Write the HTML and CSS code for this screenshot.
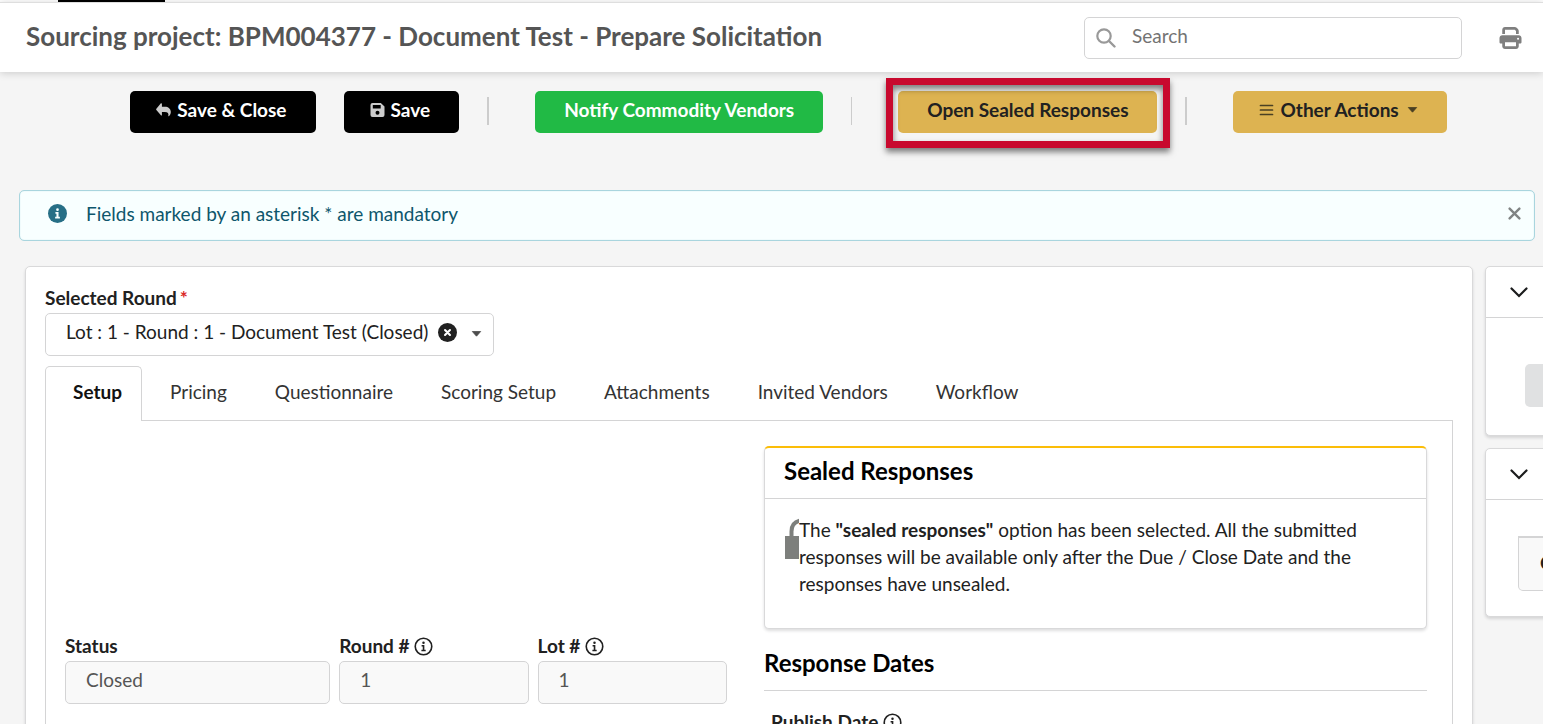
FILE: index.html
```html
<!DOCTYPE html>
<html lang="en">
<head>
<meta charset="utf-8">
<title>Sourcing project: BPM004377</title>
<link rel="stylesheet" href="styles.css">
</head>
<body>
<svg class="sprite" aria-hidden="true">
  <symbol id="info-outline" viewBox="0 0 20 20">
    <circle cx="10" cy="10" r="8.7" fill="none" stroke="currentColor" stroke-width="1.7"/>
    <circle cx="10" cy="6" r="1.3" fill="currentColor"/>
    <path d="M8 8.4h2.9v5H12.300v1.500H7.800v-1.500h1.400V9.900H8z" fill="currentColor"/>
  </symbol>
</svg>
<div class="app">
  <div class="nav-strip"><div class="nav-active"></div></div>
  <header class="header">
    <h1 class="title">Sourcing project: BPM004377 - Document Test - Prepare Solicitation</h1>
    <div class="search">
      <svg class="search-icon" viewBox="0 0 20 20" aria-hidden="true"><circle cx="8" cy="8" r="6.700" fill="none" stroke="currentColor" stroke-width="2.200"/><path d="M13 13l5.500 5.500" stroke="currentColor" stroke-width="2.400" stroke-linecap="round"/></svg>
      <input class="search-input" type="search" placeholder="Search" aria-label="Search">
    </div>
    <button class="icon-button" type="button" aria-label="Print">
      <svg class="print-icon" viewBox="0 0 512 512" aria-hidden="true"><path fill="currentColor" fill-rule="evenodd" d="M128 0C93 0 64 29 64 64v96h64V64h227l29 29v67h64V93c0-17-7-33-19-45L400 19C388 7 372 0 355 0H128zm256 352v96H128v-96h256zm64 32h32c18 0 32-14 32-32v-96c0-35-29-64-64-64H64c-35 0-64 29-64 64v96c0 18 14 32 32 32h32v64c0 35 29 64 64 64h256c35 0 64-29 64-64v-64zM432 248a24 24 0 1 1 0 48 24 24 0 0 1 0-48z"/></svg>
    </button>
  </header>

  <div class="toolbar">
    <button class="btn btn-dark" type="button">
      <svg class="btn-icon" viewBox="0 0 16 14" aria-hidden="true"><path fill="currentColor" d="M6.300.4v3.100h3.200c3.500 0 6.300 2.200 6.300 5.700 0 2.100-1 3.500-2.100 4.400-.3.200-.7 0-.6-.4.700-2.900-.5-4.200-3.600-4.200H6.300v3.200c0 .6-.7.900-1.100.5L.4 6.900a.8.800 0 0 1 0-1.200L5.200-.1c.4-.4 1.100-.1 1.100.5z"/></svg>
      Save &amp; Close
    </button>
    <button class="btn btn-dark" type="button">
      <svg class="btn-icon" viewBox="0 0 14 14" aria-hidden="true"><path fill="currentColor" fill-rule="evenodd" d="M2 0h8.300L14 3.500V12a2 2 0 0 1-2 2H2a2 2 0 0 1-2-2V2a2 2 0 0 1 2-2zm.3 2v3.600h7.900V2zM7 7.800a2 2 0 1 0 0 4 2 2 0 0 0 0-4z"/></svg>
      Save
    </button>
    <div class="divider"></div>
    <button class="btn btn-green" type="button">Notify Commodity Vendors</button>
    <div class="divider divider-thin"></div>
    <div class="highlighted">
      <button class="btn btn-gold" type="button">Open Sealed Responses</button>
      <div class="highlight"></div>
    </div>
    <div class="divider"></div>
    <button class="btn btn-gold btn-menu" type="button">
      <svg class="btn-icon" viewBox="0 0 14 14" aria-hidden="true"><path d="M1 2.500h12M1 7h12M1 11.500h12" stroke="currentColor" stroke-width="1.700" stroke-linecap="round"/></svg>
      Other Actions
      <svg class="caret" viewBox="0 0 10 6" aria-hidden="true"><path d="M.8.500h8.400L5 5.200z" fill="currentColor" stroke="currentColor" stroke-width=".8" stroke-linejoin="round"/></svg>
    </button>
  </div>

  <div class="notice" role="status">
    <svg class="notice-icon" viewBox="0 0 20 20" aria-hidden="true"><circle cx="10" cy="10" r="10" fill="#276f86"/><circle cx="10" cy="6" r="1.400" fill="#f8ffff"/><path d="M7.800 8.300h3.300v5h1.400v1.900H7.500v-1.900h1.400v-3.100H7.800z" fill="#f8ffff"/></svg>
    <p class="notice-text">Fields marked by an asterisk * are mandatory</p>
    <button class="notice-close" type="button" aria-label="Close">
      <svg class="close-icon" viewBox="0 0 12 12" aria-hidden="true"><path d="M1.500 1.500l9 9M10.500 1.500l-9 9" stroke="currentColor" stroke-width="2.200" stroke-linecap="round"/></svg>
    </button>
  </div>

  <div class="columns">
    <main class="card main-card">
      <label class="label" for="round">Selected Round<span class="required">*</span></label>
      <div class="select-box">
        <select class="select" id="round"><option>Lot : 1 - Round : 1 - Document Test (Closed)</option></select>
        <button class="select-clear" type="button" aria-label="Clear">
          <svg class="clear-icon" viewBox="0 0 20 20" aria-hidden="true"><circle cx="10" cy="10" r="10" fill="#212121"/><path d="M7.400 7.400l5.200 5.200M12.600 7.400l-5.200 5.200" stroke="#fff" stroke-width="2.200" stroke-linecap="round"/></svg>
        </button>
        <svg class="caret select-caret" viewBox="0 0 10 6" aria-hidden="true"><path d="M.8.500h8.400L5 5.200z" fill="currentColor" stroke="currentColor" stroke-width=".8" stroke-linejoin="round"/></svg>
      </div>

      <div class="tabs" role="tablist">
        <button class="tab tab-active" type="button" role="tab" aria-selected="true">Setup</button>
        <button class="tab" type="button" role="tab">Pricing</button>
        <button class="tab" type="button" role="tab">Questionnaire</button>
        <button class="tab" type="button" role="tab">Scoring Setup</button>
        <button class="tab" type="button" role="tab">Attachments</button>
        <button class="tab" type="button" role="tab">Invited Vendors</button>
        <button class="tab" type="button" role="tab">Workflow</button>
      </div>

      <div class="panel">
        <section class="fields">
          <div class="field">
            <label class="label" for="status">Status</label>
            <input class="input" id="status" type="text" value="Closed" readonly>
          </div>
          <div class="field">
            <label class="label" for="round-number">Round # <svg class="info-icon"><use href="#info-outline"/></svg></label>
            <input class="input" id="round-number" type="text" value="1" readonly>
          </div>
          <div class="field">
            <label class="label" for="lot-number">Lot # <svg class="info-icon"><use href="#info-outline"/></svg></label>
            <input class="input" id="lot-number" type="text" value="1" readonly>
          </div>
        </section>
        <section class="details">
          <article class="card sealed">
            <h2 class="heading sealed-title">Sealed Responses</h2>
            <div class="sealed-body">
              <svg class="lock-icon" viewBox="0 0 14 42" aria-hidden="true"><path d="M6.500 19v-5.500C6.500 7 10 3.500 16 2.500" fill="none" stroke="#7d7f7c" stroke-width="4"/><path d="M0 18h14v23H0z" fill="#7d7f7c"/></svg>
              <p class="sealed-text">The <strong>"sealed responses"</strong> option has been selected. All the submitted responses will be available only after the Due / Close Date and the responses have unsealed.</p>
            </div>
          </article>
          <h2 class="heading dates-title">Response Dates</h2>
          <div class="label date-label">Publish Date <svg class="info-icon"><use href="#info-outline"/></svg></div>
        </section>
      </div>
    </main>

    <aside class="side">
      <section class="card side-card">
        <button class="side-toggle" type="button" aria-label="Toggle section"><svg class="chevron" viewBox="0 0 18 11" aria-hidden="true"><path d="M1.500 1.500L9 9l7.500-7.500" fill="none" stroke="#1b1c1d" stroke-width="2.200" stroke-linecap="round"/></svg></button>
        <div class="side-body side-body-action"><button class="side-action" type="button" aria-label="Action"></button></div>
      </section>
      <section class="card side-card">
        <button class="side-toggle" type="button" aria-label="Toggle section"><svg class="chevron" viewBox="0 0 18 11" aria-hidden="true"><path d="M1.500 1.500L9 9l7.500-7.500" fill="none" stroke="#1b1c1d" stroke-width="2.200" stroke-linecap="round"/></svg></button>
        <div class="side-body side-body-cell"><div class="side-cell">C</div></div>
      </section>
    </aside>
  </div>
</div>
</body>
</html>
```
FILE: styles.css
```css
* { box-sizing: border-box; }

body {
  margin: 0;
  background: #f5f5f5;
  color: #212121;
  font-family: Lato, "Open Sans", sans-serif;
  font-size: 19px;
  line-height: 27px;
}

h1, h2, p { margin: 0; }

button, input, select { font: inherit; color: inherit; }

button { cursor: pointer; }

.sprite { display: block; width: 0; height: 0; }

.app { height: 100vh; overflow: hidden; }

/* Header */
.nav-strip { height: 2px; background: #fff; }
.nav-active { width: 107px; height: 2px; margin-left: 58px; background: #000; }

.header {
  display: flex;
  align-items: center;
  height: 70px;
  padding: 0 20px 0 26px;
  border-top: 1px solid #dedede;
  background: #fff;
  box-shadow: 0 1px 8px rgba(0, 0, 0, 0.18);
}

.title {
  flex: 1;
  padding-bottom: 4px;
  color: #555;
  font-size: 26px;
  line-height: 32px;
  font-weight: 700;
}

.search { position: relative; width: 378px; margin-right: 36px; }

.search-icon {
  position: absolute;
  top: 11px;
  left: 12px;
  width: 20px;
  height: 20px;
  color: #999;
}

.search-input {
  display: block;
  width: 100%;
  height: 42px;
  padding: 0 16px 4px 47px;
  border: 1px solid #d4d4d5;
  border-radius: 5px;
  background: #fff;
}

.search-input::placeholder { color: #737373; opacity: 1; }

.icon-button {
  display: flex;
  padding: 0;
  border: 0;
  background: none;
  color: #7f7f7f;
}

.print-icon { width: 25px; height: 22px; }

/* Action toolbar */
.toolbar {
  display: flex;
  justify-content: center;
  gap: 28px;
  padding: 19px 0 0 34px;
}

.btn {
  display: flex;
  align-items: center;
  gap: 6px;
  height: 42px;
  padding: 0 29px 6px;
  border: 0;
  border-radius: 5px;
  font-weight: 700;
  white-space: nowrap;
}

.btn-dark { padding-left: 26px; background: #000; color: #fff; }
.btn-dark .btn-icon { color: #ccc; }
.btn-green { background: #21ba45; color: #fff; }
.btn-gold { background: #ddb351; color: #212121; }
.btn-menu { padding-left: 26px; }
.btn-menu .btn-icon,
.btn-menu .caret { color: #4a4023; }
.btn-menu .caret { margin-left: 2px; }
.btn-icon { width: 15px; height: 14px; margin-top: 2px; overflow: visible; }
.caret { width: 11px; height: 6px; margin-top: 2px; }

.divider {
  width: 2px;
  height: 28px;
  margin: 6px 18px 0 0;
  background: #ccc;
}

.divider-thin { width: 1px; }

.highlighted { position: relative; }

.highlight {
  position: absolute;
  inset: -13px -13px -15px -12px;
  border: 7px solid #c8092e;
  box-shadow: 0 4px 6px rgba(0, 0, 0, 0.5), inset 0 4px 6px rgba(0, 0, 0, 0.5);
  pointer-events: none;
}

/* Notice */
.notice {
  display: flex;
  align-items: center;
  height: 51px;
  margin: 57px 8px 0 19px;
  padding: 0 13px 4px 28px;
  border: 1px solid #a9d5de;
  border-radius: 5px;
  background: #f8ffff;
  box-shadow: inset 0 0 1px #a9d5de;
  color: #0e566c;
}

.notice-icon { width: 19px; height: 19px; margin-right: 19px; }
.notice-text { flex: 1; }

.notice-close {
  display: flex;
  padding: 0;
  border: 0;
  background: none;
  color: #808484;
}

.close-icon { width: 13px; height: 13px; }

/* Columns */
.columns {
  display: grid;
  grid-template-columns: minmax(0, 1fr) 58px;
  gap: 12px;
  padding: 25px 0 0 25px;
}

.card {
  border: 1px solid #d9d9da;
  border-radius: 5px;
  background: #fff;
  box-shadow: 0 2px 3px rgba(34, 36, 38, 0.15);
}

.main-card { min-height: 600px; padding: 17px 19px; }

.label { display: block; font-weight: 700; }
.required { margin-left: 3px; color: #db2828; }

.select-box { position: relative; width: 449px; margin-top: 2px; }

.select {
  display: block;
  width: 100%;
  height: 43px;
  padding: 0 58px 6px 20px;
  border: 1px solid #d4d4d5;
  border-radius: 5px;
  background: #fff;
  appearance: none;
}

.select-clear {
  position: absolute;
  top: 10px;
  right: 37px;
  display: flex;
  padding: 0;
  border: 0;
  background: none;
}

.clear-icon { width: 19px; height: 19px; }

.select-caret {
  position: absolute;
  top: 16px;
  right: 12px;
  color: #4d4d4d;
}

/* Tabs */
.tabs { display: flex; margin-top: 10px; }

.tab {
  height: 54px;
  padding: 0 19px 4px 27px;
  border: 1px solid transparent;
  border-bottom: 0;
  background: none;
  color: #333;
}

.tab-active {
  z-index: 1;
  height: 55px;
  margin-bottom: -1px;
  padding-bottom: 5px;
  border-color: #d4d4d5;
  border-radius: 5px 5px 0 0;
  background: #fff;
  color: #111;
  font-weight: 700;
}

.panel {
  display: grid;
  grid-template-columns: minmax(0, 1fr) minmax(0, 1fr);
  gap: 36px;
  padding: 25px 25px 25px 19px;
  border: 1px solid #d4d4d5;
}

.fields {
  display: grid;
  grid-template-columns: 7fr 5fr 5fr;
  align-content: start;
  gap: 9px;
  padding: 186px 1px 0 0;
}

.input {
  display: block;
  width: 100%;
  height: 43px;
  margin-top: 2px;
  padding: 0 20px 6px;
  border: 1px solid #d4d4d5;
  border-radius: 5px;
  background: #f9f9f9;
  color: #555;
}

.info-icon { width: 19px; height: 19px; vertical-align: -3px; }

/* Sealed responses */
.sealed { border-top: 2px solid #fbbd08; }

.heading {
  color: #000;
  font-size: 24px;
  line-height: 32px;
  font-weight: 700;
}

.sealed-title { padding: 7px 19px 11px; border-bottom: 1px solid #d4d4d5; }
.sealed-body { display: flex; padding: 17px 60px 31px 20px; }
.sealed-text { flex: 1; }
.lock-icon { flex: none; width: 14px; height: 42px; margin-top: 2px; }

.dates-title { margin-top: 18px; padding-bottom: 11px; border-bottom: 1px solid #d4d4d5; }
.date-label { padding: 17px 7px; }

/* Side column */
.side { display: flex; flex-direction: column; align-items: flex-start; gap: 12px; }
.side-card { width: 320px; }

.side-toggle {
  display: flex;
  align-items: center;
  width: 100%;
  height: 51px;
  padding: 0 24px;
  border: 0;
  border-bottom: 1px solid #d4d4d5;
  background: none;
}

.chevron { width: 18px; height: 11px; }
.side-body-action { padding: 46px 39px 28px; }
.side-body-cell { padding: 36px 32px 25px; }

.side-action {
  display: block;
  width: 100%;
  height: 43px;
  border: 0;
  border-radius: 5px;
  background: #e0e1e2;
}

.side-cell {
  height: 55px;
  padding: 11px 21px;
  border: 1px solid #d4d4d5;
  border-top-width: 2px;
  border-radius: 0 0 5px 5px;
  background: #f9f9f9;
  font-weight: 700;
}
```
